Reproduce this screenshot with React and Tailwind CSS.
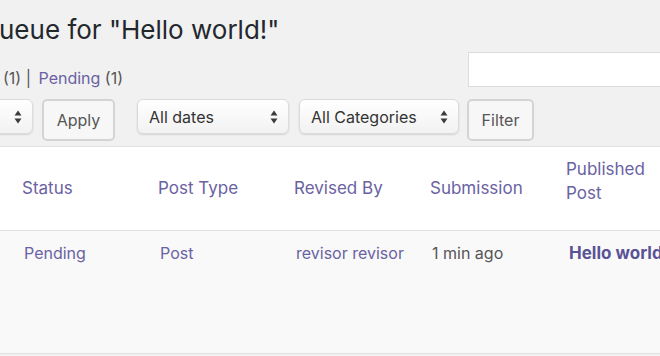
import React from 'react';

const font = { fontFamily: 'Inter, "Liberation Sans", Arial, sans-serif' };

function Arrows() {
  return (
    <svg className="w-[8px] h-[14px] shrink-0" viewBox="0 0 8 14">
      <path d="M4 0.5 L7.5 5.5 H0.5 Z" fill="#3c3c3c" />
      <path d="M4 13.5 L7.5 8.5 H0.5 Z" fill="#3c3c3c" />
    </svg>
  );
}

function Select({ label, className }) {
  return (
    <div className={`h-[35px] flex items-center justify-between pl-[11px] pr-[10px] rounded-[6px] border border-[#dadada] bg-gradient-to-b from-white to-[#f2f2f2] shadow-[0_1px_2px_rgba(0,0,0,0.12)] text-[16px] text-[#333] ${className}`}>
      <span>{label}</span>
      <Arrows />
    </div>
  );
}

function Button({ label, className }) {
  return (
    <div className={`h-[42px] flex items-center justify-center rounded-[5px] border-2 border-[#d4d4d4] bg-[#f7f7f7] text-[16px] text-[#555] ${className}`}>
      {label}
    </div>
  );
}

const headers = ['Status', 'Post Type', 'Revised By', 'Submission'];

export default function App() {
  return (
    <div className="w-[660px] h-[356px] overflow-hidden bg-[#f1f1f1]" style={font}>
      {/* Title */}
      <h1 className="pt-[12px] ml-[-1px] text-[26px] leading-[36px] text-[#23282d] whitespace-nowrap">
        ueue for "Hello world!"
      </h1>

      {/* Status links + search */}
      <div className="flex items-start h-[47px] mt-[4px]">
        <div className="flex-1 mt-[16px] ml-[3px] text-[16px] leading-[20px] text-[#555] whitespace-nowrap">
          (1) | <span className="ml-[3px] text-[#6a62a3]">Pending</span> (1)
        </div>
        <div className="w-[200px] h-[35px] mr-[-8px] bg-white border border-[#dcdcdc] shrink-0" />
      </div>

      {/* Bulk actions & filters */}
      <div className="flex items-start h-[47px] whitespace-nowrap">
        <Select label="" className="w-[60px] ml-[-27px]" />
        <Button label="Apply" className="w-[73px] ml-[9px]" />
        <Select label="All dates" className="w-[152px] ml-[22px]" />
        <Select label="All Categories" className="w-[160px] ml-[10px]" />
        <Button label="Filter" className="w-[67px] ml-[8px]" />
      </div>

      {/* Table */}
      <div className="border-t border-[#e1e1e1]">
        <div className="grid grid-cols-[136px_136px_136px_136px_136px] pl-[14px] h-[84px] bg-white border-b border-[#e1e1e1] text-[17px] leading-[24px] text-[#6a62a3]">
          {headers.map((h) => (
            <div key={h} className="pl-[8px] pt-[29px] whitespace-nowrap">{h}</div>
          ))}
          <div className="pl-[8px] pt-[10px]">Published<br />Post</div>
        </div>
        <div className="grid grid-cols-[136px_136px_136px_136px_136px] pl-[14px] h-[123px] bg-[#f9f9f9] border-b border-[#e1e1e1] text-[16px] leading-[24px] pt-[10px] whitespace-nowrap">
          <div className="pl-[10px] text-[#6a62a3]">Pending</div>
          <div className="pl-[10px] text-[#6a62a3]">Post</div>
          <div className="pl-[10px] text-[#6a62a3]">revisor revisor</div>
          <div className="pl-[10px] text-[#555]">1 min ago</div>
          <div className="pl-[11px] text-[17px] font-bold text-[#5a5296]">Hello world!</div>
        </div>
      </div>
    </div>
  );
}
